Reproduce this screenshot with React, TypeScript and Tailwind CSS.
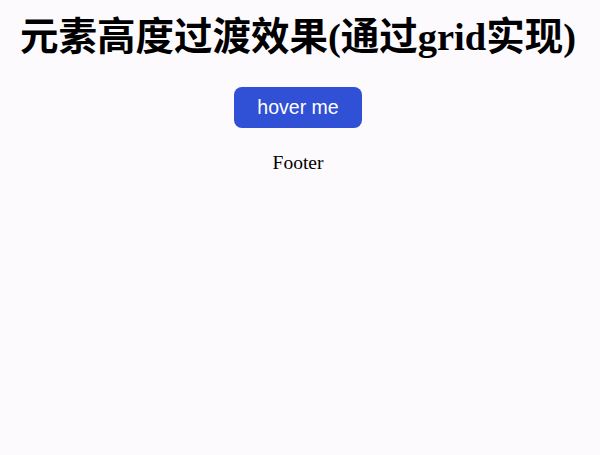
export default function App() {
  return (
    <div className="min-h-[455px] bg-[#fcfafd] text-black font-['Liberation_Serif','Noto_Sans_CJK_SC',serif] flex flex-col items-center pr-[4px]">
      <h1 className="mt-[15px] text-[38.5px] leading-[44px] font-bold whitespace-nowrap">
        元素高度过渡效果(通过grid实现)
      </h1>
      <button className="mt-[28px] w-[128px] h-[41px] rounded-[8px] bg-[#3050d5] text-white text-[19.5px] font-['Liberation_Sans',sans-serif]">
        hover me
      </button>
      <p className="mt-[23px] text-[19.5px] leading-[24px]">Footer</p>
    </div>
  );
}
